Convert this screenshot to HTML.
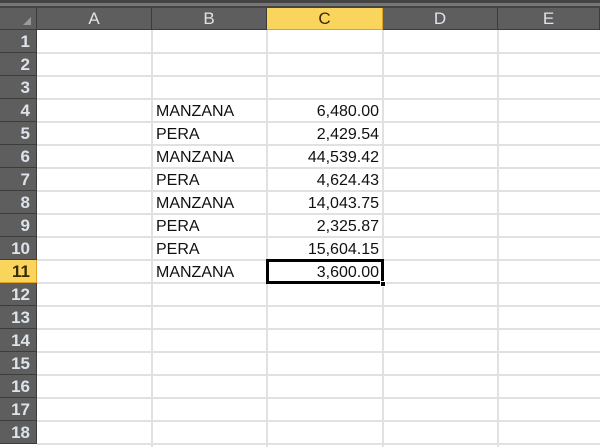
<!DOCTYPE html>
<html><head><style>
*{margin:0;padding:0;box-sizing:border-box}
body{width:600px;height:447px;overflow:hidden;background:#fff;position:relative;font-family:"Liberation Sans",Arial,sans-serif}
.a{position:absolute}
.ch{position:absolute;top:8px;height:22px;background:#5e5e5e;color:#dde3ea;font-size:17px;text-align:center;line-height:22px;border-right:1px solid #3c3c3c;border-bottom:1px solid #3c3c3c}
.rh{position:absolute;left:0;width:37px;height:23px;background:#5e5e5e;color:#dde3ea;font-size:17px;font-weight:bold;text-align:right;padding-right:6px;line-height:23px;border-bottom:1px solid #3c3c3c;border-right:1px solid #3c3c3c}
.sel{background:#f9d55e !important;color:#3a2a00 !important;border-color:#e0a020 !important}
.vl{position:absolute;top:30px;width:2px;height:417px;background:#dfe1e2}
.hl{position:absolute;left:37px;width:563px;height:2px;background:#dfe1e2}
.t{position:absolute;font-size:16px;color:#111;line-height:23px}
</style></head><body>
<div class="a" style="left:0;top:0;width:600px;height:8px;background:#444"></div>
<div class="a" style="left:0;top:3px;width:600px;height:3px;background:#777"></div>
<div class="ch" style="left:0;width:37px"><div style="position:absolute;right:5px;bottom:4px;width:0;height:0;border-left:8px solid transparent;border-bottom:8px solid #9a9a9a"></div></div>
<div class="ch" style="left:37px;width:115px">A</div>
<div class="ch" style="left:152px;width:115px">B</div>
<div class="ch sel" style="left:267px;width:116px">C</div>
<div class="ch" style="left:383px;width:115px">D</div>
<div class="ch" style="left:498px;width:102px">E</div>
<div id="rows"></div>
<div class="vl" style="left:151px"></div>
<div class="vl" style="left:266px"></div>
<div class="vl" style="left:382px"></div>
<div class="vl" style="left:497px"></div>
<script>
var h='';for(var i=1;i<=18;i++){var y=30+(i-1)*23;h+='<div class="rh'+(i==11?' sel':'')+'" style="top:'+y+'px">'+i+'</div>';h+='<div class="hl" style="top:'+(y+22)+'px"></div>';}
document.getElementById('rows').innerHTML=h;
</script>
<div class="t" style="left:156px;top:100px">MANZANA</div>
<div class="t" style="left:156px;top:123px">PERA</div>
<div class="t" style="left:156px;top:146px">MANZANA</div>
<div class="t" style="left:156px;top:169px">PERA</div>
<div class="t" style="left:156px;top:192px">MANZANA</div>
<div class="t" style="left:156px;top:215px">PERA</div>
<div class="t" style="left:156px;top:238px">PERA</div>
<div class="t" style="left:156px;top:261px">MANZANA</div>
<div class="t" style="right:221px;top:100px">6,480.00</div>
<div class="t" style="right:221px;top:123px">2,429.54</div>
<div class="t" style="right:221px;top:146px">44,539.42</div>
<div class="t" style="right:221px;top:169px">4,624.43</div>
<div class="t" style="right:221px;top:192px">14,043.75</div>
<div class="t" style="right:221px;top:215px">2,325.87</div>
<div class="t" style="right:221px;top:238px">15,604.15</div>
<div class="t" style="right:221px;top:261px">3,600.00</div>
<div class="a" style="left:266px;top:259px;width:118px;height:25px;border:3px solid #000"></div>
<div class="a" style="left:380px;top:281px;width:6px;height:6px;background:#000;border:1px solid #fff"></div>
</body></html>
